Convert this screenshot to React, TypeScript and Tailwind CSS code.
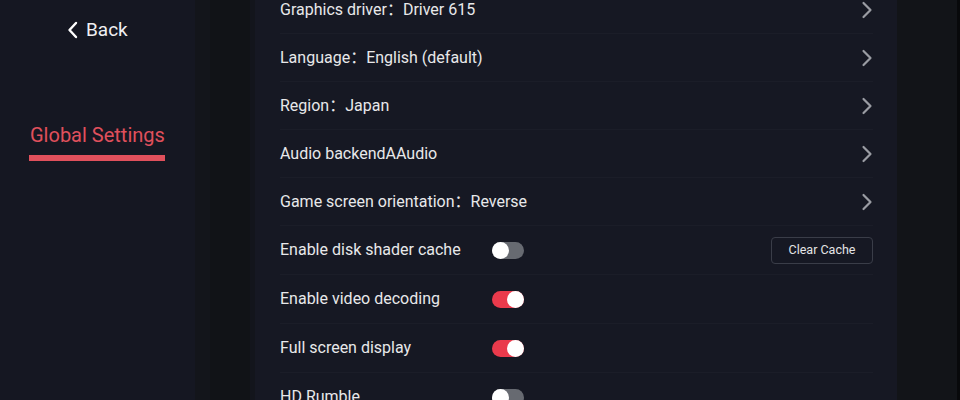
import React from "react";

const Chevron = () => (
  <svg width="12" height="18" viewBox="0 0 12 18" fill="none">
    <path d="M2.5 2 L9.5 9 L2.5 16" stroke="#9a9ca3" strokeWidth="2.2" strokeLinecap="round" strokeLinejoin="round" />
  </svg>
);

const Toggle = ({ on }: { on: boolean }) => (
  <div
    className={
      "w-[32px] h-[17px] rounded-full flex items-center " +
      (on ? "bg-[#ea3a4c] justify-end" : "bg-[#676a71] justify-start")
    }
  >
    <div className="w-[17px] h-[17px] rounded-full bg-white" />
  </div>
);

type Row =
  | { kind: "nav"; label: string }
  | { kind: "toggle"; label: string; on: boolean; button?: string };

const rows: Row[] = [
  { kind: "nav", label: "Graphics driver：Driver 615" },
  { kind: "nav", label: "Language：English (default)" },
  { kind: "nav", label: "Region：Japan" },
  { kind: "nav", label: "Audio backendAAudio" },
  { kind: "nav", label: "Game screen orientation：Reverse" },
  { kind: "toggle", label: "Enable disk shader cache", on: false, button: "Clear Cache" },
  { kind: "toggle", label: "Enable video decoding", on: true },
  { kind: "toggle", label: "Full screen display", on: true },
  { kind: "toggle", label: "HD Rumble", on: false },
];

export default function App() {
  return (
    <div
      className="w-[960px] h-[400px] overflow-hidden flex bg-[#121419] text-[#e8e8ea]"
      style={{ fontFamily: "Roboto, 'Noto Sans CJK SC', sans-serif" }}
    >
      {/* Sidebar */}
      <div className="w-[195px] shrink-0 bg-[#151722] flex flex-col">
        <div className="flex items-center pl-[67px] pt-[19px] h-[22px] box-content">
          <svg width="12" height="18" viewBox="0 0 12 18" fill="none">
            <path d="M9 2 L2.5 9 L9 16" stroke="#ffffff" strokeWidth="2.4" strokeLinecap="round" strokeLinejoin="round" />
          </svg>
          <span className="ml-[7px] text-[19px] leading-[22px] text-[#f0f0f2]">Back</span>
        </div>
        <div className="mt-[81px] pl-[29px] flex flex-col items-start">
          <div className="pl-[1px] text-[20px] leading-[26px] text-[#e0505c]">Global Settings</div>
          <div className="mt-[7px] w-[136px] h-[6px] bg-[#e0505c]" />
        </div>
      </div>
      {/* Gap */}
      <div className="w-[15px] shrink-0 bg-[#13151b]" />
      <div className="w-[40px] shrink-0 bg-[#111317]" />
      <div className="w-[5px] shrink-0 bg-[#13151c]" />
      {/* Main panel */}
      <div className="w-[642px] shrink-0 bg-[#161823] pl-[25px] pr-[24px] overflow-hidden">
        <div className="mt-[-14px] flex flex-col">
          {rows.map((r, i) => (
            <div
              key={i}
              className={
                "flex items-center justify-between border-b border-[#1b1d28] " +
                (r.kind === "nav" ? "h-[48px]" : "h-[49px]")
              }
            >
              {r.kind === "nav" ? (
                <>
                  <span className="text-[16px]">{r.label}</span>
                  <span>
                    <Chevron />
                  </span>
                </>
              ) : (
                <>
                  <div className="flex items-center">
                    <span className="text-[16px] w-[212px]">{r.label}</span>
                    <Toggle on={r.on} />
                  </div>
                  {r.button ? (
                    <button className="w-[102px] h-[27px] rounded-[4px] border border-[#3a3d48] text-[12.5px] text-[#e4e4e6] bg-transparent">
                      {r.button}
                    </button>
                  ) : null}
                </>
              )}
            </div>
          ))}
        </div>
      </div>
      {/* Right */}
      <div className="flex-1 bg-[#121418] border-r-[3px] border-[#08090b]" />
    </div>
  );
}
